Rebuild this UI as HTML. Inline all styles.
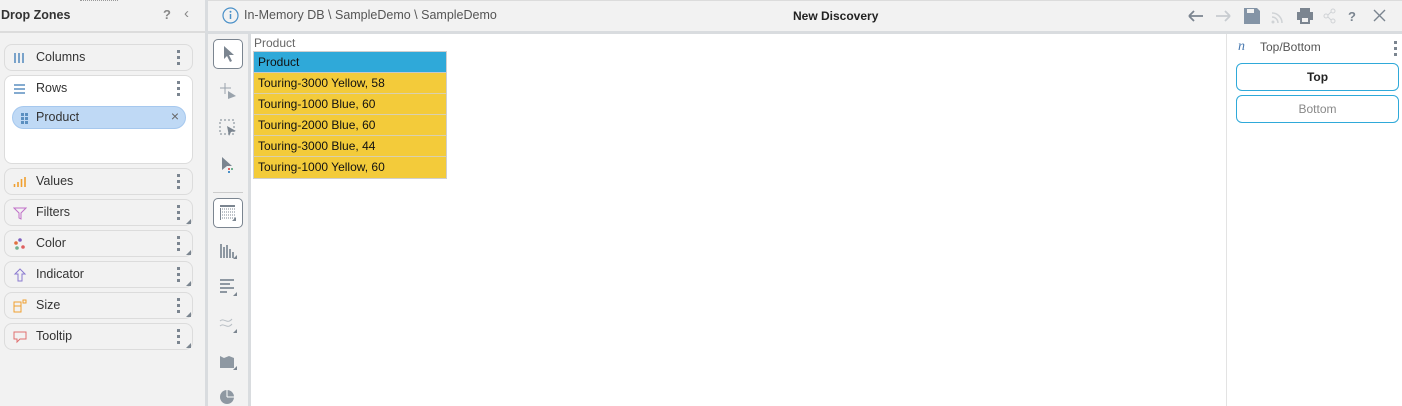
<!DOCTYPE html>
<html><head><meta charset="utf-8"><style>
*{box-sizing:border-box;margin:0;padding:0}
body{width:1402px;height:406px;overflow:hidden;background:#fff;font-family:"Segoe UI","Liberation Sans",sans-serif;font-size:12px;color:#333;position:relative}
.a{position:absolute}
.dz{position:absolute;left:4px;width:189px;height:27px;border:1px solid #dcdcdc;border-radius:8px;background:#f2f2f2}
.dz .t{position:absolute;left:31px;top:5px;font-size:12.5px;color:#333}
.dz .ic{position:absolute;left:8px;top:6px;width:14px;height:14px}
.dots{position:absolute;right:12px;top:5px;width:3px}
.dots i{display:block;width:3px;height:3px;background:#7b8590;margin-bottom:3px}
.tri{position:absolute;right:1px;bottom:1px;width:0;height:0;border-left:5px solid transparent;border-bottom:5px solid #7b8590}
.row{position:absolute;left:254px;width:192px;height:21px;background:#f3cb3a;border-bottom:1px solid #d8d0b0;font-family:"Liberation Sans",sans-serif;font-size:12px;color:#111;padding:3px 4px}
.tb{position:absolute;left:219px;width:18px;height:18px}
</style></head><body>
<!-- left panel -->
<div class="a" style="left:0;top:0;width:205px;height:406px;background:#f2f2f2"></div>
<div class="a" style="left:0;top:31px;width:205px;height:2px;background:#dcdcdc"></div>
<div class="a" style="left:80px;top:0;width:38px;height:2px;border-top:1px dotted #999"></div>
<div class="a" style="left:1px;top:8px;font-size:12.5px;font-weight:600;color:#333">Drop Zones</div>
<div class="a" style="left:163px;top:7px;font-size:13px;font-weight:bold;color:#888">?</div>
<div class="a" style="left:184px;top:5px;font-size:15px;color:#888">&#8249;</div>

<div class="dz" style="top:44px"><svg class="ic" viewBox="0 0 14 14"><path d="M2 2v10M6 2v10M10 2v10" stroke="#5b8fc0" stroke-width="1.6"/></svg><span class="t">Columns</span><div class="dots"><i></i><i></i><i></i></div></div>
<div class="dz" style="top:75px;height:89px;background:#fff"><svg class="ic" viewBox="0 0 14 14"><path d="M1 3h11M1 7h11M1 11h11" stroke="#5b8fc0" stroke-width="1.6"/></svg><span class="t">Rows</span><div class="dots"><i></i><i></i><i></i></div>
<div class="a" style="left:7px;top:30px;width:174px;height:23px;border-radius:12px;background:#bfd9f5;border:1px solid #a6c8ee"><svg class="a" style="left:7px;top:5px" width="10" height="12" viewBox="0 0 10 12"><g fill="#5b8fc0"><rect x="1" y="1" width="3" height="3"/><rect x="5" y="1" width="3" height="3"/><rect x="1" y="5" width="3" height="3"/><rect x="5" y="5" width="3" height="3"/><rect x="1" y="9" width="3" height="3"/><rect x="5" y="9" width="3" height="3"/></g></svg><span class="a" style="left:23px;top:3px;font-size:12.5px">Product</span><span class="a" style="right:6px;top:1px;font-size:14px;color:#666">&#215;</span></div></div>
<div class="dz" style="top:168px"><svg class="ic" viewBox="0 0 14 14"><path d="M1.5 9v3M5 7v5M8.5 4v8M12 2v10" stroke="#f0a030" stroke-width="1.6"/></svg><span class="t">Values</span><div class="dots"><i></i><i></i><i></i></div></div>
<div class="dz" style="top:199px"><svg class="ic" viewBox="0 0 14 14"><path d="M1 2h12L8 7v6L6 12V7z" fill="none" stroke="#c070c8" stroke-width="1"/></svg><span class="t">Filters</span><div class="dots"><i></i><i></i><i></i></div><div class="tri"></div></div>
<div class="dz" style="top:230px"><svg class="ic" viewBox="0 0 14 14"><circle cx="7" cy="3" r="1.8" fill="#7e5fc0"/><circle cx="3" cy="6" r="1.8" fill="#e07040"/><circle cx="4" cy="11" r="1.8" fill="#70b090"/><circle cx="10" cy="10" r="1.8" fill="#e06060"/></svg><span class="t">Color</span><div class="dots"><i></i><i></i><i></i></div><div class="tri"></div></div>
<div class="dz" style="top:261px"><svg class="ic" viewBox="0 0 14 14"><path d="M7 1L2 6h3v7h4V6h3z" fill="none" stroke="#8a7ad0" stroke-width="1"/></svg><span class="t">Indicator</span><div class="dots"><i></i><i></i><i></i></div><div class="tri"></div></div>
<div class="dz" style="top:292px"><svg class="ic" viewBox="0 0 14 14"><path d="M1 3h7v10H1zM1 7h7" fill="none" stroke="#f0a030"/><rect x="10" y="1" width="3" height="3" fill="none" stroke="#f0a030"/></svg><span class="t">Size</span><div class="dots"><i></i><i></i><i></i></div><div class="tri"></div></div>
<div class="dz" style="top:323px"><svg class="ic" viewBox="0 0 14 14"><path d="M1 2h12v7H7l-3 3V9H1z" fill="none" stroke="#e07070"/></svg><span class="t">Tooltip</span><div class="dots"><i></i><i></i><i></i></div><div class="tri"></div></div>

<div class="a" style="left:205px;top:0;width:3px;height:406px;background:#d9dcdf"></div>
<!-- header -->
<div class="a" style="left:208px;top:0;width:1194px;height:31px;background:#f2f2f2;border-top:1px solid #dcdcdc"></div>
<div class="a" style="left:208px;top:31px;width:1194px;height:3px;background:#d9dcdf"></div>
<svg class="a" style="left:222px;top:7px" width="17" height="17" viewBox="0 0 17 17"><circle cx="8.5" cy="8.5" r="7.5" fill="none" stroke="#4a90c8" stroke-width="1.2"/><path d="M8.5 7v5" stroke="#4a90c8" stroke-width="1.5"/><circle cx="8.5" cy="4.8" r="1" fill="#4a90c8"/></svg>
<div class="a" style="left:244px;top:8px;font-size:12.5px;color:#555">In-Memory DB \ SampleDemo \ SampleDemo</div>
<div class="a" style="left:793px;top:9px;font-size:12px;font-weight:600;color:#222">New Discovery</div>
<svg class="a" style="left:1186px;top:7px" width="216" height="18" viewBox="0 0 216 18">
<path d="M3 9h14M3 9l5-5M3 9l5 5" stroke="#7b8590" stroke-width="1.8" fill="none"/>
<path d="M30 9h14M44 9l-5-5M44 9l-5 5" stroke="#c8ccd0" stroke-width="1.8" fill="none"/>
<path d="M58 1h13l3 3v13H58z" fill="#8494a6"/><rect x="61" y="2" width="7" height="4" fill="#f2f2f2"/>
<g fill="none" stroke="#d0d3d6" stroke-width="1.5"><path d="M86 6a10 10 0 0 1 10 10M86 10a6 6 0 0 1 6 6"/></g><circle cx="87" cy="15" r="1.5" fill="#d0d3d6"/>
<path d="M114 1h10v4h-10zM111 5h16v8h-3v4h-10v-4h-3z" fill="#7b8590"/><rect x="116" y="11" width="6" height="4" fill="#f2f2f2"/>
<g fill="none" stroke="#d0d3d6"><circle cx="140" cy="9" r="2"/><circle cx="147" cy="4" r="2"/><circle cx="147" cy="14" r="2"/><path d="M142 8l3-3M142 10l3 3"/></g>
<text x="162" y="14" font-family="Liberation Sans" font-weight="bold" font-size="13" fill="#7b8590">?</text>
<path d="M188 3l11 11M199 3l-11 11" stroke="#7b8590" stroke-width="1.4"/>
</svg>
<!-- toolbar -->
<div class="a" style="left:208px;top:34px;width:40px;height:372px;background:#f2f2f2"></div>
<div class="a" style="left:248px;top:34px;width:3px;height:372px;background:#d9dcdf"></div>
<div class="a" style="left:213px;top:39px;width:30px;height:30px;border:1px solid #7b8590;border-radius:5px;background:#fff"></div>
<svg class="tb" style="top:45px" viewBox="0 0 18 18"><path d="M5 1l10 9h-5l3 6-2 1-3-6-3 3z" fill="#7b8590"/></svg>
<svg class="tb" style="top:82px" viewBox="0 0 18 18"><path d="M6 1v11M1 6h11" stroke="#9aa3ac"/><path d="M9 9l8 5-8 3z" fill="#9aa3ac"/></svg>
<svg class="tb" style="top:119px" viewBox="0 0 18 18"><rect x="1" y="1" width="14" height="14" fill="none" stroke="#7b8590" stroke-dasharray="2 2"/><path d="M8 7l9 5-5 1-2 4z" fill="#7b8590"/></svg>
<svg class="tb" style="top:156px" viewBox="0 0 18 18"><path d="M3 1l10 9H8l-5 4z" fill="#7b8590"/><rect x="9" y="12" width="2" height="2" fill="#e06060"/><rect x="12" y="12" width="2" height="2" fill="#70b090"/><rect x="9" y="15" width="2" height="2" fill="#4a90c8"/></svg>
<div class="a" style="left:213px;top:192px;width:30px;height:1px;background:#ccc"></div>
<div class="a" style="left:213px;top:198px;width:30px;height:30px;border:1px solid #7b8590;border-radius:5px;background:#fff"></div>
<svg class="tb" style="top:204px" viewBox="0 0 18 18"><g fill="#7b8590"><rect x="1" y="1" width="15" height="2"/><rect x="1" y="4" width="1" height="12"/></g><g stroke="#7b8590" stroke-dasharray="1 1"><path d="M3 5h13M3 8h13M3 11h13M3 14h13"/></g><path d="M17 13v4h-4z" fill="#7b8590"/></svg>
<svg class="tb" style="top:241px" viewBox="0 0 18 18"><path d="M2 3v14M5 6v11M8 4v13M11 8v9M14 11v6" stroke="#8e98a2" stroke-width="2"/><path d="M18 14v4h-4z" fill="#7b8590"/></svg>
<svg class="tb" style="top:278px" viewBox="0 0 18 18"><path d="M1 2h14M1 6h10M1 10h14M1 14h7" stroke="#8e98a2" stroke-width="2"/><path d="M18 14v4h-4z" fill="#7b8590"/></svg>
<svg class="tb" style="top:315px" viewBox="0 0 18 18"><path d="M1 6c4-4 7 4 12-2M1 11c4-4 7 4 12-2" stroke="#b8bec4" fill="none"/><path d="M18 14v4h-4z" fill="#7b8590"/></svg>
<svg class="tb" style="top:352px" viewBox="0 0 18 18"><path d="M1 4l4 2 5-2 5 2v10H1z" fill="#8e98a2"/><path d="M18 14v4h-4z" fill="#7b8590"/></svg>
<svg class="tb" style="top:388px" viewBox="0 0 18 18"><circle cx="8" cy="9" r="7" fill="#8e98a2"/><path d="M8 9V2M8 9h7" stroke="#fff"/></svg>
<!-- content -->
<div class="a" style="left:254px;top:36px;font-family:'Liberation Sans',sans-serif;font-size:12px;color:#666">Product</div>
<div class="a" style="left:253px;top:51px;width:194px;height:128px;background:#cfcfcf"></div>
<div class="row" style="top:52px;background:#2fa9d9;border-bottom:1px solid #c8c8c8;height:21px">Product</div>
<div class="row" style="top:73px">Touring-3000 Yellow, 58</div>
<div class="row" style="top:94px">Touring-1000 Blue, 60</div>
<div class="row" style="top:115px">Touring-2000 Blue, 60</div>
<div class="row" style="top:136px">Touring-3000 Blue, 44</div>
<div class="row" style="top:157px;border-bottom:none">Touring-1000 Yellow, 60</div>
<!-- right panel -->
<div class="a" style="left:1226px;top:34px;width:1px;height:372px;background:#e3e3e3"></div>
<div class="a" style="left:1238px;top:39px;font-family:'Liberation Serif',serif;font-style:italic;font-size:14px;color:#4a7ab0">n</div>
<div class="a" style="left:1260px;top:40px;font-size:12px;color:#555">Top/Bottom</div>
<div class="dots" style="right:auto;left:1394px;top:41px"><i></i><i></i><i></i></div>
<div class="a" style="left:1236px;top:63px;width:163px;height:28px;border:1px solid #2fa9d9;border-radius:6px;text-align:center;line-height:26px;font-family:'Liberation Sans',sans-serif;font-weight:bold;font-size:12px;color:#222">Top</div>
<div class="a" style="left:1236px;top:95px;width:163px;height:28px;border:1px solid #2fa9d9;border-radius:6px;text-align:center;line-height:26px;font-family:'Liberation Sans',sans-serif;font-size:12px;color:#888">Bottom</div>
</body></html>
